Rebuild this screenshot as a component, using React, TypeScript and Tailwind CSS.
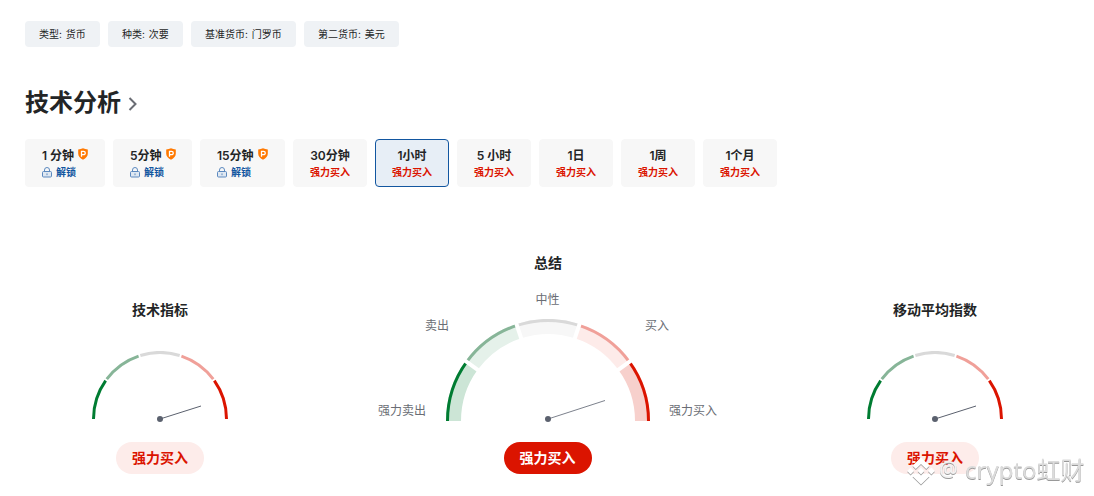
const FONT = 'font-[Inter,"Noto_Sans_CJK_SC",sans-serif]'

const pills = [
  { text: '类型: 货币', width: 'w-[75px]' },
  { text: '种类: 次要', width: 'w-[75px]' },
  { text: '基准货币: 门罗币', width: 'w-[105px]' },
  { text: '第二货币: 美元', width: 'w-[95px]' },
]

const lockedTabs = [
  { label: '1 分钟', width: 'w-20' },
  { label: '5分钟', width: 'w-[79px]' },
  { label: '15分钟', width: 'w-[85px]' },
]

const tabs = ['30分钟', '1小时', '5 小时', '1日', '1周', '1个月']

const ProBadge = () => (
  <svg className="-mt-[5px]" width="10" height="12" viewBox="0 0 10 12">
    <path
      d="M5 0.3C6.5 1 8 1.4 9.8 1.5V5.6C9.8 8.4 8 10.4 5 11.7C2 10.4 0.2 8.4 0.2 5.6V1.5C2 1.4 3.5 1 5 0.3Z"
      fill="#ff7901"
    />
    <path
      d="M3.5 8.8V3.4H5.6a1.6 1.6 0 0 1 0 3.3H3.5"
      fill="none"
      stroke="#fff"
      strokeWidth="1.3"
    />
  </svg>
)

const Lock = () => (
  <svg width="10" height="11" viewBox="0 0 10 11" fill="none" stroke="#5c89bf">
    <path d="M2.5 4.8V3a2.5 2.5 0 0 1 5 0v1.8" />
    <rect x="0.5" y="4.5" width="9" height="5.5" rx="1" fill="#dfe8f2" />
    <path d="M5 6.4v1.8" />
  </svg>
)

// point on a half circle, 0deg is right and 180deg is left
const point = (cx: number, cy: number, r: number, deg: number) => {
  const a = (deg * Math.PI) / 180
  return `${(cx + r * Math.cos(a)).toFixed(2)} ${(cy - r * Math.sin(a)).toFixed(2)}`
}

type ArcProps = {
  cx: number
  cy: number
  r: number
  from: number
  to: number
  width: number
  color: string
}

const Arc = ({ cx, cy, r, from, to, width, color }: ArcProps) => (
  <path
    d={`M${point(cx, cy, r, from)} A${r} ${r} 0 0 1 ${point(cx, cy, r, to)}`}
    fill="none"
    stroke={color}
    strokeWidth={width}
  />
)

const segments = [
  { from: 180, to: 144, color: '#007c32', band: '#cce5d6' },
  { from: 144, to: 108, color: '#87b598', band: '#e5f1ea' },
  { from: 108, to: 72, color: '#d9d9d9', band: '#f7f7f7' },
  { from: 72, to: 36, color: '#f0a099', band: '#fdebe9' },
  { from: 36, to: 0, color: '#db1400', band: '#f7d0cc' },
]

const SmallGauge = ({ title }: { title: string }) => (
  <div className="flex w-[136px] flex-col items-center pt-[58px]">
    <h3 className="text-[14px] leading-5 font-semibold">{title}</h3>
    <svg className="mt-[31px]" width="136" height="72" viewBox="0 0 136 72">
      {segments.map((s) => (
        <Arc
          key={s.from}
          cx={68}
          cy={68}
          r={66.5}
          from={s.from === 180 ? 180 : s.from - 0.8}
          to={s.to === 0 ? 0 : s.to + 0.8}
          width={3}
          color={s.color}
        />
      ))}
      <path d="M68 68L109 55" stroke="#5b616e" />
      <circle cx="68" cy="68" r="3" fill="#5b616e" />
    </svg>
    <div className="mt-[19px] flex h-8 w-[88px] items-center justify-center rounded-full bg-[#fdecea] pb-[2px] text-[14px] font-semibold text-[#db1400]">
      强力买入
    </div>
  </div>
)

const SummaryGauge = () => (
  <div className="flex w-[344px] flex-col items-center pt-[11px] text-[12px] leading-4 text-[#6a6d74]">
    <h3 className="text-[14px] leading-5 font-semibold text-[#232526]">总结</h3>
    <span className="mt-[19px] mr-px">中性</span>
    <div className="mt-[11px] flex">
      <div className="flex w-[70px] flex-col items-end justify-between">
        <span className="-mt-px w-[21px] whitespace-nowrap">卖出</span>
        <span className="mr-[20px] mb-[4px] whitespace-nowrap">强力卖出</span>
      </div>
      <svg width="204" height="104" viewBox="0 0 204 104">
        {segments.map((s) => (
          <g key={s.from}>
            <Arc
              cx={102}
              cy={102}
              r={94.5}
              from={s.from}
              to={s.to}
              width={15}
              color={s.band}
            />
            <Arc
              cx={102}
              cy={102}
              r={100.5}
              from={s.from}
              to={s.to}
              width={3}
              color={s.color}
            />
          </g>
        ))}
        {[36, 72, 108, 144].map((deg) => (
          <path
            key={deg}
            d={`M${point(102, 102, 86, deg)} L${point(102, 102, 103, deg)}`}
            stroke="#fff"
            strokeWidth="4"
          />
        ))}
        <path d="M102 100L159 81.5" stroke="#5b616e" strokeWidth="0.8" />
        <circle cx="102" cy="100" r="3" fill="#5b616e" />
      </svg>
      <div className="flex w-[70px] flex-col justify-between">
        <span className="-mt-px -ml-[5px]">买入</span>
        <span className="mb-[4px] ml-[19px] whitespace-nowrap">强力买入</span>
      </div>
    </div>
    <div className="mt-[19px] flex h-8 w-[88px] items-center justify-center rounded-full bg-[#db1400] pr-px text-[14px] font-semibold text-white">
      强力买入
    </div>
  </div>
)

const Watermark = () => (
  <div className='absolute top-[452px] left-[907px] flex h-9 items-center font-["Noto_Sans","Noto_Sans_CJK_SC",sans-serif] text-[24px] whitespace-nowrap text-[#dcdcdc] [filter:drop-shadow(0.5px_1px_0.5px_#999)]'>
    <svg
      className="mt-[2px]"
      width="28"
      height="28"
      viewBox="0 0 28 28"
      fill="#fff"
    >
      <path d="M14 0.5L22.5 8.8L19.2 12L14 6.9L8.8 12L5.5 8.8Z" />
      <path d="M14 27.5L22.5 19.2L19.2 16L14 21.1L8.8 16L5.5 19.2Z" />
      <path d="M14 10.6L17.4 14L14 17.4L10.6 14Z" />
      <path d="M3.6 10.6L7 14L3.6 17.4L0.2 14Z" />
      <path d="M24.4 10.6L27.8 14L24.4 17.4L21 14Z" />
    </svg>
    <span className="ml-[4px] w-[26px] text-[21px] font-semibold text-[#f2f2f2]">
      @
    </span>
    <span>crypto虹财</span>
  </div>
)

const App = () => {
  return (
    <div
      className={`${FONT} relative h-[496px] w-[1094px] overflow-hidden bg-white px-[25px] pt-[21px] text-[#232526]`}
    >
      <div className="flex gap-2">
        {pills.map((p) => (
          <div
            key={p.text}
            className={`${p.width} flex h-[26px] items-center rounded bg-[#eff2f5] pl-[14px] text-[10px] whitespace-nowrap [word-spacing:1px]`}
          >
            {p.text}
          </div>
        ))}
      </div>

      <div className="mt-[39px] flex h-8 items-center">
        <h2 className="pt-[2px] text-[24px] leading-8 font-bold">技术分析</h2>
        <svg className="mt-[3px] ml-[7px]" width="9" height="14" viewBox="0 0 9 14">
          <path d="M1.5 1L7.5 7L1.5 13" fill="none" stroke="#6a6d74" strokeWidth="2" />
        </svg>
      </div>

      {/* timeframes */}
      <div className="mt-[21px] flex gap-2">
        {lockedTabs.map((t) => (
          <div
            key={t.label}
            className={`${t.width} flex h-12 flex-col rounded bg-[#f7f7f7] pt-[9px] pl-[17px]`}
          >
            <div className="flex h-4 items-center gap-1 text-[12px] font-semibold whitespace-nowrap">
              {t.label}
              <ProBadge />
            </div>
            <div className="flex h-4 items-center gap-[4px] text-[10px] font-semibold text-[#1256a0]">
              <Lock />
              解锁
            </div>
          </div>
        ))}
        {tabs.map((t) => (
          <div
            key={t}
            className={`flex h-12 w-[74px] flex-col items-center rounded border pt-[8px] ${
              t === '1小时'
                ? 'border-[#1256a0] bg-[#e7eef6]'
                : 'border-[#f7f7f7] bg-[#f7f7f7]'
            }`}
          >
            <div className="text-[12px] leading-4 font-semibold">{t}</div>
            <div className="text-[10px] leading-4 font-semibold text-[#db1400]">
              强力买入
            </div>
          </div>
        ))}
      </div>

      {/* gauges */}
      <div className="mt-[55px] flex pl-[67px]">
        <SmallGauge title="技术指标" />
        <div className="ml-[148px]">
          <SummaryGauge />
        </div>
        <div className="ml-[147px]">
          <SmallGauge title="移动平均指数" />
        </div>
      </div>
      <Watermark />
    </div>
  )
}

export default App
